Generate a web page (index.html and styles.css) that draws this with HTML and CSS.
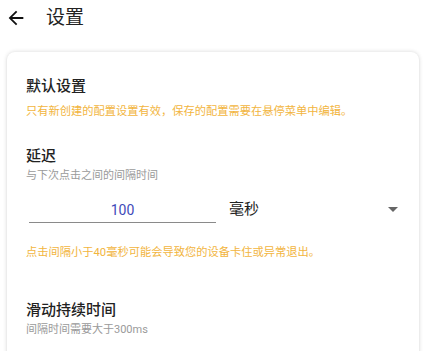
FILE: index.html
```html
<!DOCTYPE html>
<html>
<head>
<meta charset="utf-8">
<link rel="stylesheet" href="styles.css">
</head>
<body>
<header class="appbar">
  <svg class="back" width="22" height="22" viewBox="0 0 24 24"><path d="M20 11H7.83l5.59-5.59L12 4l-8 8 8 8 1.41-1.41L7.83 13H20v-2z" fill="#111"/></svg>
  <h1 class="title">设置</h1>
</header>
<main class="card">
  <section class="group first">
    <h2 class="head">默认设置</h2>
    <p class="warn">只有新创建的配置设置有效，保存的配置需要在悬停菜单中编辑。</p>
  </section>
  <section class="group second">
    <h2 class="head">延迟</h2>
    <p class="sub">与下次点击之间的间隔时间</p>
    <div class="row">
      <div class="input">100</div>
      <div class="select">
        <span>毫秒</span>
        <span class="caret"></span>
      </div>
    </div>
    <p class="warn warn2">点击间隔小于40毫秒可能会导致您的设备卡住或异常退出。</p>
  </section>
  <section class="group">
    <h2 class="head">滑动持续时间</h2>
    <p class="sub">间隔时间需要大于300ms</p>
  </section>
</main>
</body>
</html>
```
FILE: styles.css
```css
html, body {
  margin: 0;
  padding: 0;
  background: #fff;
  font-family: Roboto, "Noto Sans CJK SC", sans-serif;
  overflow: hidden;
}
.appbar {
  display: flex;
  align-items: center;
  height: 36px;
  padding-left: 5px;
}
.back {
  display: block;
}
.title {
  margin: 0 0 0 19px;
  font-size: 19px;
  font-weight: 400;
  color: #222;
  line-height: 24px;
}
.card {
  margin: 16px 5px 0 7px;
  border-radius: 8px;
  box-shadow: 0 0 4px rgba(0,0,0,0.16), 0 1px 2px rgba(0,0,0,0.06);
  padding: 24px 19px 40px 19px;
  height: 400px;
}
.first {
  margin-bottom: 27px;
}
.second {
  margin-bottom: 40px;
}
.head {
  margin: 0;
  font-size: 15px;
  font-weight: 500;
  color: #222;
  line-height: 20px;
}
.warn {
  margin: 9px 0 0;
  font-size: 11.25px;
  line-height: 14px;
  color: #f2b53e;
}
.sub {
  margin: 3px 0 0;
  font-size: 11px;
  line-height: 14px;
  color: #9a9a9a;
}
.row {
  display: flex;
  align-items: flex-end;
  margin-top: 15px;
}
.input {
  width: 187px;
  margin-left: 3px;
  text-align: center;
  font-size: 14px;
  line-height: 22px;
  color: #3f4ab8;
  border-bottom: 1px solid #8a8a8a;
  padding-bottom: 1px;
}
.select {
  flex: 1;
  display: flex;
  align-items: center;
  justify-content: space-between;
  padding-left: 13px;
  padding-right: 2px;
  font-size: 15px;
  color: #222;
  line-height: 22px;
  padding-bottom: 3px;
}
.caret {
  width: 0;
  height: 0;
  border-left: 5px solid transparent;
  border-right: 5px solid transparent;
  border-top: 5px solid #666;
}
.warn2 {
  margin-top: 23px;
}
```
